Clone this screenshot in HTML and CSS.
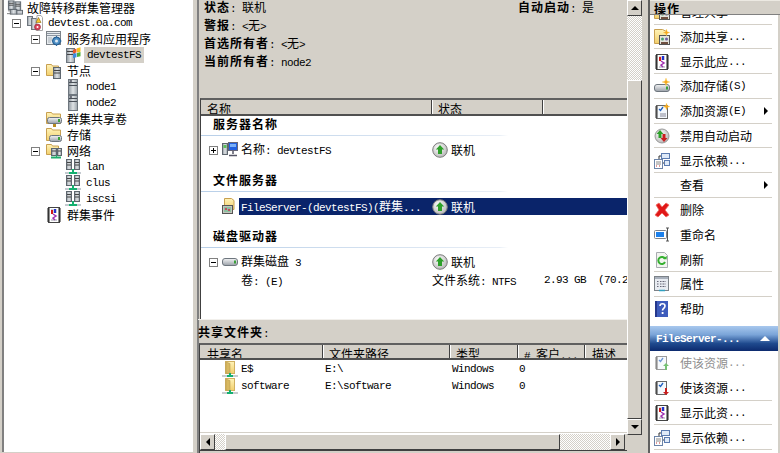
FILE: index.html
```html
<!DOCTYPE html>
<html lang="zh-CN">
<head>
<meta charset="utf-8">
<title>故障转移群集管理器</title>
<link rel="stylesheet" href="styles.css">
</head>
<body>
<svg class="defs" xmlns="http://www.w3.org/2000/svg">
<defs>
<linearGradient id="m" x1="0" x2="1" y1="0" y2="0"><stop offset="0" stop-color="#8f979e"/><stop offset=".5" stop-color="#dfe3e6"/><stop offset="1" stop-color="#9aa2a8"/></linearGradient>
<linearGradient id="f" x1="0" x2="0" y1="0" y2="1"><stop offset="0" stop-color="#fff3b8"/><stop offset="1" stop-color="#f2cf6c"/></linearGradient>
<linearGradient id="d" x1="0" x2="0" y1="0" y2="1"><stop offset="0" stop-color="#f4f5f6"/><stop offset="1" stop-color="#9aa0a8"/></linearGradient>
<radialGradient id="r" cx=".4" cy=".35" r=".7"><stop offset="0" stop-color="#fff"/><stop offset="1" stop-color="#b4b4b4"/></radialGradient>
<symbol id="srv" viewBox="0 0 16 16"><rect x="3.5" y=".5" width="9" height="15" fill="url(#m)" stroke="#6e767e"/><path d="M4 3.5h8M4 6.5h8" stroke="#4a5058"/><path d="M5 2h2" stroke="#223"/></symbol>
<symbol id="root" viewBox="0 0 17 16"><rect x="1.5" y=".5" width="6" height="9" fill="url(#m)" stroke="#5e666e"/><rect x="8.5" y="1.5" width="6" height="9" fill="url(#m)" stroke="#5e666e"/><path d="M2 3h5M2 5h5M9 4h5M9 6h5" stroke="#444"/><rect x="3.5" y="9.5" width="7" height="5" fill="url(#m)" stroke="#5e666e"/><rect x="10.5" y="10.5" width="6" height="4" fill="#c9cdd2" stroke="#5e666e"/><path d="M1 11h3M0 14h4" stroke="#777"/></symbol>
<symbol id="cluster" viewBox="0 0 16 16"><rect x=".5" y="1.5" width="5" height="9" fill="url(#m)" stroke="#6e767e"/><rect x="4.5" y="3.5" width="5" height="11" fill="url(#m)" stroke="#6e767e"/><path d="M10 .5h4l1.5 2v13H9z" fill="#fff" stroke="#aaa"/><path d="M11.5 2.5l2.5 5h-5z" fill="#f7c52a" stroke="#8a6a10" stroke-width=".6"/><circle cx="10.5" cy="12" r="3" fill="#d8435a" stroke="#8c2030" stroke-width=".6"/><circle cx="10.5" cy="12" r="1" fill="#fff"/></symbol>
<symbol id="svc" viewBox="0 0 16 16"><rect x=".5" y=".5" width="14" height="13" fill="#e8ecef" stroke="#7c8288"/><path d="M1 2.500h13M1 4.500h13" stroke="#8c95a0"/><path d="M2 7h4M2 9h4M2 11h3" stroke="#a8b0b8"/><circle cx="10.500" cy="10" r="4" fill="#4e8fc4" stroke="#20568a"/><circle cx="10.500" cy="10" r="1.500" fill="#dfeaf4"/><path d="M10.500 5v1.500M10.500 13.500V15M6 10h1M14 10h1.500M7.500 7l1 1M12.500 12l1 1M13.500 7l-1 1M8.500 12l-1 1" stroke="#2e6ca0"/></symbol>
<symbol id="winsrv" viewBox="0 0 16 16"><rect x="1.500" y="1.500" width="8" height="14" fill="url(#m)" stroke="#6e767e"/><path d="M2 4.500h7M2 7.500h7" stroke="#444"/><path d="M8 3l3.500-1.500v4L8 6.500z" fill="#e8582a"/><path d="M12 1.200l3.500-1v4.500L12 5.500z" fill="#f4c020"/><path d="M8 7l3.500-1v4.300L8 11z" fill="#3a8ce0"/><path d="M12 6l3.500-1v4.300L12 10z" fill="#52b03a"/></symbol>
<symbol id="fsrv" viewBox="0 0 16 16"><path d="M.5 12.500V1.500h5l1 1.500h6v9.500z" fill="url(#f)" stroke="#c8a050"/><rect x="7.500" y="4.500" width="7" height="11" fill="url(#m)" stroke="#5e666e"/><path d="M8 7.500h6M8 10h6" stroke="#444"/></symbol>
<symbol id="fdisk" viewBox="0 0 16 16"><path d="M.5 12.500V1.500h5l1 1.500h8v9.500z" fill="url(#f)" stroke="#c8a050"/><rect x="1.500" y="6.500" width="14" height="6" rx="2" fill="url(#d)" stroke="#6e767e"/><rect x="12" y="8" width="2" height="3" fill="#3aa03a"/><rect x="7" y="13" width="3" height="3" fill="#b88a20"/></symbol>
<symbol id="fdisk2" viewBox="0 0 16 16"><path d="M.5 13.500V1.500h5l1 1.500h8v10.500z" fill="url(#f)" stroke="#c8a050"/><rect x="3.500" y="8.500" width="12" height="6" rx="2" fill="url(#d)" stroke="#6e767e"/><rect x="12" y="10" width="2" height="3" fill="#3aa03a"/></symbol>
<symbol id="fnet" viewBox="0 0 16 16"><path d="M.5 11.500V1.500h5l1 1.500h6v8.500z" fill="url(#f)" stroke="#c8a050"/><rect x="5.500" y="5.500" width="5" height="7" fill="url(#m)" stroke="#5e666e"/><rect x="11.500" y="5.500" width="4" height="7" fill="url(#m)" stroke="#5e666e"/><path d="M6 8h4M12 8h3" stroke="#444"/><path d="M5 14.500h10" stroke="#1fae6c" stroke-width="2"/><path d="M10.500 12v2" stroke="#1fae6c"/></symbol>
<symbol id="net" viewBox="0 0 16 16"><rect x="1.500" y=".5" width="5" height="10" fill="url(#m)" stroke="#5e666e"/><rect x="9.500" y=".5" width="5" height="10" fill="url(#m)" stroke="#5e666e"/><path d="M2 3.500h4M2 6h4M10 3.500h4M10 6h4" stroke="#444"/><path d="M0 14h4M12 14h4" stroke="#c4cad0" stroke-width="2"/><path d="M4 14h8" stroke="#15b070" stroke-width="2"/><path d="M8 10v4" stroke="#15b070" stroke-width="2"/></symbol>
<symbol id="log" viewBox="0 0 16 16"><rect x="2.500" y=".5" width="11" height="15" fill="#fff" stroke="#444"/><path d="M1 2h3M1 4h3M1 6h3M1 8h3M1 10h3M1 12h3M1 14h3M12 2h3M12 4h3M12 6h3M12 8h3M12 10h3M12 12h3M12 14h3" stroke="#222"/><path d="M5 3h6M5 5h6M5 13h6" stroke="#9a9aaa"/><path d="M6 3v4" stroke="#d01818" stroke-width="2"/><path d="M9 2v4" stroke="#2030d0" stroke-width="2"/><path d="M7 7l3 2-3 2 2 2" fill="none" stroke="#a030b0" stroke-width="1.500"/></symbol>
<symbol id="up" viewBox="0 0 16 16"><circle cx="8" cy="8" r="7.300" fill="url(#r)" stroke="#7c7c7c"/><path d="M8 3l4.200 4.500H10V12H6V7.500H3.800z" fill="#2ea02a"/></symbol>
<symbol id="net2" viewBox="0 0 16 16"><rect x=".5" y="1.500" width="5" height="11" fill="url(#m)" stroke="#5e666e"/><rect x="1.500" y="3" width="3" height="3" fill="#5cc05c"/><rect x="6.500" y=".5" width="9" height="8" fill="#2060e0" stroke="#667"/><path d="M8 2h6v3H8z" fill="#7ab0f8"/><path d="M11 9v3M7 13.500h8" stroke="#556" stroke-width="1.500"/></symbol>
<symbol id="fapp" viewBox="0 0 16 16"><path d="M2.500 11V.5h7l2.500 2v9z" fill="url(#f)" stroke="#c8a050"/><rect x=".5" y="7.500" width="10" height="8" fill="#c4c4bc" stroke="#555"/><rect x="2" y="9" width="7" height="5" fill="#8cc0a0"/><path d="M3 10h2v2H3zM6 11h2v2H6z" fill="#c05060"/></symbol>
<symbol id="disk" viewBox="0 0 16 16"><rect x=".5" y="4.500" width="15" height="7" rx="2.500" fill="url(#d)" stroke="#6e767e"/><rect x="12" y="6.500" width="2" height="3" fill="#3aa03a"/></symbol>
<symbol id="nfold" viewBox="0 0 16 16"><rect x="3.500" y=".5" width="9" height="12" fill="url(#f)" stroke="#d0b060"/><path d="M4 1l4 1.500V13L4 12z" fill="#d8b860" stroke="#b89a50" stroke-width=".6"/><path d="M0 15h16" stroke="#c8cdd0" stroke-width="2"/><path d="M5 15h6M8 12v3" stroke="#15b070" stroke-width="2"/></symbol>
<symbol id="star" viewBox="0 0 8 8"><path d="M4 0l1 3 3 1-3 1-1 3-1-3-3-1 3-1z" fill="#f6a81c" stroke="#fbd46a" stroke-width=".4"/></symbol>
<symbol id="ashare" viewBox="0 0 16 16"><path d="M.5 14.500V.5h8l4 2v12z" fill="url(#f)" stroke="#c8a050"/><rect x="5.500" y="6.500" width="10" height="9" fill="#e4e4dc" stroke="#555"/><circle cx="8.500" cy="10" r="1.500" fill="#48a070"/><circle cx="12.500" cy="10" r="1.500" fill="#7060a0"/><path d="M7 14h7" stroke="#705040" stroke-width="2"/><use href="#star" x="9" y="0" width="7" height="7"/></symbol>
<symbol id="adisk" viewBox="0 0 16 16"><rect x=".5" y="6.500" width="15" height="7" rx="2.500" fill="url(#d)" stroke="#6e767e"/><rect x="12" y="8.500" width="2" height="3" fill="#3aa03a"/><use href="#star" x="8" y="0" width="8" height="8"/></symbol>
<symbol id="ares" viewBox="0 0 16 16"><rect x="2.500" y="2.500" width="11" height="13" fill="#f4f8fc" stroke="#666"/><path d="M1 4h3M1 6h3M1 8h3M1 10h3M1 12h3M1 14h3" stroke="#333"/><path d="M5 6l1.500 1.500L9 4" fill="none" stroke="#2060c0" stroke-width="1.300"/><path d="M6 11h6M6 13h6" stroke="#889"/><use href="#star" x="9" y="0" width="7" height="7"/></symbol>
<symbol id="adis" viewBox="0 0 16 16"><circle cx="8" cy="8" r="7" fill="url(#r)" stroke="#999"/><path d="M6 2l3.500 4H7.500v4h-3V6H2.500z" fill="#2ea02a"/><path d="M10 14l-3.500-4h2V6h3v4h2z" fill="#c81e1e"/></symbol>
<symbol id="adep" viewBox="0 0 16 16"><rect x=".5" y="6.500" width="8" height="9" fill="#fff" stroke="#6c84a8"/><path d="M2 9h5M2 11h5" stroke="#888"/><path d="M2 13h1M5 13h1" stroke="#c03030"/><rect x="7.500" y=".5" width="8" height="5" fill="#dfeaf8" stroke="#5c7cb0"/><rect x="10.500" y="7.500" width="5" height="5" fill="#dfeaf8" stroke="#5c7cb0"/><path d="M5 6V3h2M9 10h1" stroke="#333" fill="none"/></symbol>
<symbol id="adel" viewBox="0 0 16 16"><path d="M2 3l3-2 3 4 4-4 3 2-4 5 4 5-3 2-4-4-4 4-3-2 4-5z" fill="#e01818" stroke="#f06a60" stroke-width=".8"/></symbol>
<symbol id="aren" viewBox="0 0 16 16"><rect x=".5" y="3.500" width="12" height="8" rx="1" fill="#fff" stroke="#7c828c"/><rect x="2" y="5" width="8" height="5" fill="#1c80ec"/><path d="M12 1h3M13.500 1v13M12 14h3" stroke="#555" fill="none"/></symbol>
<symbol id="aref" viewBox="0 0 16 16"><path d="M2.500 .5h8l3 3v12h-11z" fill="#f2f4f0" stroke="#a8acb0"/><path d="M11 7a3.500 3.500 0 1 0 0 3" fill="none" stroke="#35b030" stroke-width="2"/><path d="M9 6.500l3.500 1 .5-3.500z" fill="#35b030"/></symbol>
<symbol id="aprop" viewBox="0 0 16 16"><rect x=".5" y=".5" width="14" height="14" fill="#e8ecf2" stroke="#7c8288"/><rect x="1" y="1" width="13" height="2" fill="#a8b0bc"/><path d="M3 5.500h2M6 5.500h6M3 8h2M6 8h6M3 10.500h2M6 10.500h6" stroke="#667" stroke-dasharray="1 .5"/><path d="M5 14.500h6" stroke="#30a0c0" stroke-width="1.500"/></symbol>
<symbol id="ahelp" viewBox="0 0 16 16"><rect x="1" y="0" width="13" height="16" fill="#3e5cbc"/><rect x="1" y="0" width="2" height="16" fill="#25388c"/><path d="M6 5c0-3 5-3 5 0 0 2.300-2.500 2.300-2.500 4.500" fill="none" stroke="#fff" stroke-width="1.600"/><rect x="7.700" y="11" width="1.800" height="2" fill="#fff"/></symbol>
<symbol id="aresu" viewBox="0 0 16 16"><rect x="2.500" y="1.500" width="10" height="13" fill="#f4f8fc" stroke="#666"/><path d="M1 3h3M1 5h3M1 7h3M1 9h3M1 11h3M1 13h3" stroke="#333"/><path d="M5 5l1.500 1.500L9 3" fill="none" stroke="#2060c0" stroke-width="1.300"/><path d="M12 8l3 3h-2v4h-2v-4H9z" fill="#2ea02a"/></symbol>
<symbol id="aresd" viewBox="0 0 16 16"><rect x="2.500" y="1.500" width="10" height="13" fill="#f4f8fc" stroke="#666"/><path d="M1 3h3M1 5h3M1 7h3M1 9h3M1 11h3M1 13h3" stroke="#333"/><path d="M5 5l1.500 1.500L9 3" fill="none" stroke="#2060c0" stroke-width="1.300"/><path d="M12 15l-3-3h2V8h2v4h2z" fill="#c81e1e"/></symbol>
</defs>
</svg>

<div class="app">
  <aside class="tree-pane">
    <div class="trow l0"><svg class="ic"><use href="#root"/></svg><span>故障转移群集管理器</span></div>
    <div class="trow l1"><i class="exp minus"></i><svg class="ic"><use href="#cluster"/></svg><span class="en">devtest.oa.com</span></div>
    <div class="trow l2"><i class="exp minus"></i><svg class="ic"><use href="#svc"/></svg><span>服务和应用程序</span></div>
    <div class="trow l3"><svg class="ic"><use href="#winsrv"/></svg><span class="en tsel">devtestFS</span></div>
    <div class="trow l2"><i class="exp minus"></i><svg class="ic"><use href="#fsrv"/></svg><span>节点</span></div>
    <div class="trow l3"><svg class="ic"><use href="#srv"/></svg><span class="en">node1</span></div>
    <div class="trow l3"><svg class="ic"><use href="#srv"/></svg><span class="en">node2</span></div>
    <div class="trow l2n"><svg class="ic"><use href="#fdisk"/></svg><span>群集共享卷</span></div>
    <div class="trow l2n"><svg class="ic"><use href="#fdisk2"/></svg><span>存储</span></div>
    <div class="trow l2"><i class="exp minus"></i><svg class="ic"><use href="#fnet"/></svg><span>网络</span></div>
    <div class="trow l3"><svg class="ic"><use href="#net"/></svg><span class="en">lan</span></div>
    <div class="trow l3"><svg class="ic"><use href="#net"/></svg><span class="en">clus</span></div>
    <div class="trow l3"><svg class="ic"><use href="#net"/></svg><span class="en">iscsi</span></div>
    <div class="trow l2n"><svg class="ic"><use href="#log"/></svg><span>群集事件</span></div>
  </aside>

  <main class="center">
    <section class="summary">
      <div class="sum-grid">
        <div><b class="b">状态<span class="en">: </span></b><span class="val">联机</span></div>
        <div><b class="b">自动启动<span class="en">: </span></b><span class="val">是</span></div>
        <div class="wide"><b class="b">警报<span class="en">: </span></b><span class="val"><span class="en">&lt;</span>无<span class="en">&gt;</span></span></div>
        <div class="wide"><b class="b">首选所有者<span class="en">: </span></b><span class="val"><span class="en">&lt;</span>无<span class="en">&gt;</span></span></div>
        <div class="wide"><b class="b">当前所有者<span class="en">: </span></b><span class="val en">node2</span></div>
      </div>
    </section>

    <section class="list">
      <div class="lhead">
        <div class="hc c-name">名称</div>
        <div class="hc c-state">状态</div>
        <div class="hc c-fill"></div>
      </div>
      <div class="lbody">
        <h3 class="gt">服务器名称</h3>
        <div class="grow">
          <div class="slot"><i class="exp plus"></i><svg class="ic"><use href="#net2"/></svg></div>
          <div class="main">
            <div class="m1">名称<span class="en">: devtestFS</span></div>
            <div class="m2"><svg class="ic"><use href="#up"/></svg><span>联机</span></div>
          </div>
        </div>
        <h3 class="gt">文件服务器</h3>
        <div class="grow">
          <div class="slot"><i class="exp blank"></i><svg class="ic"><use href="#fapp"/></svg></div>
          <div class="main sel">
            <div class="m1"><span class="en">FileServer-(devtestFS)(</span>群集<span class="en">...</span></div>
            <div class="m2"><svg class="ic"><use href="#up"/></svg><span>联机</span></div>
          </div>
        </div>
        <h3 class="gt">磁盘驱动器</h3>
        <div class="grow tight">
          <div class="slot"><i class="exp minus"></i><svg class="ic"><use href="#disk"/></svg></div>
          <div class="main">
            <div class="m1">群集磁盘<span class="en"> 3</span></div>
            <div class="m2"><svg class="ic"><use href="#up"/></svg><span>联机</span></div>
          </div>
        </div>
        <div class="grow2">
          <div class="m1">卷<span class="en">: (E)</span></div>
          <div class="m3">文件系统<span class="en">: NTFS</span></div>
          <div class="m4 en">2.93 GB  (70.2%)</div>
        </div>
      </div>
    </section>

    <section class="band"><b class="b">共享文件夹<span class="en">:</span></b></section>

    <section class="shares">
      <div class="shead">
        <div class="hc s1">共享名</div>
        <div class="hc s2">文件夹路径</div>
        <div class="hc s3">类型</div>
        <div class="hc s4"><span class="en"># </span>客户<span class="en">...</span></div>
        <div class="hc s5">描述</div>
      </div>
      <div class="sbody">
        <div class="srow en"><div class="d1"><svg class="ic"><use href="#nfold"/></svg>E$</div><div class="d2">E:\</div><div class="d3">Windows</div><div>0</div></div>
        <div class="srow en"><div class="d1"><svg class="ic"><use href="#nfold"/></svg>software</div><div class="d2">E:\software</div><div class="d3">Windows</div><div>0</div></div>
      </div>
      <div class="hscroll">
        <div class="btn"><i class="tri left"></i></div>
        <div class="dither d-a"></div>
        <div class="thumb grow-x"></div>
        <div class="dither d-b"></div>
        <div class="btn"><i class="tri right"></i></div>
      </div>
    </section>
  </main>

  <div class="vscroll">
    <div class="btn v"><i class="tri upw"></i></div>
    <div class="dither d-c"></div>
    <div class="thumb d-d"></div>
    <div class="btn v"><i class="tri down"></i></div>
  </div>

  <aside class="actions">
    <div class="ahead"><b class="b">操作</b></div>
    <div class="ascroll">
      <div class="alist">
        <div class="ai"><svg class="ic"><use href="#ashare"/></svg>管理共享<span class="en">...</span></div>
        <div class="ai"><svg class="ic"><use href="#ashare"/></svg>添加共享<span class="en">...</span></div>
        <div class="ai"><svg class="ic"><use href="#log"/></svg>显示此应<span class="en">...</span></div>
        <div class="ai"><svg class="ic"><use href="#adisk"/></svg>添加存储<span class="en">(S)</span></div>
        <div class="ai"><svg class="ic"><use href="#ares"/></svg>添加资源<span class="en">(E)</span><i class="tri sub"></i></div>
        <div class="ai"><svg class="ic"><use href="#adis"/></svg>禁用自动启动</div>
        <div class="ai"><svg class="ic"><use href="#adep"/></svg>显示依赖<span class="en">...</span></div>
        <div class="ai"><span class="ic"></span>查看<i class="tri sub"></i></div>
        <div class="ai nl"><svg class="ic"><use href="#adel"/></svg>删除</div>
        <div class="ai nl"><svg class="ic"><use href="#aren"/></svg>重命名</div>
        <div class="ai"><svg class="ic"><use href="#aref"/></svg>刷新</div>
        <div class="ai"><svg class="ic"><use href="#aprop"/></svg>属性</div>
        <div class="ai nl"><svg class="ic"><use href="#ahelp"/></svg>帮助</div>
      </div>
      <div class="asec"><b class="en">FileServer-...</b><i class="tri upw white"></i></div>
      <div class="ai nl off"><svg class="ic"><use href="#aresu"/></svg>使该资源<span class="en">...</span></div>
      <div class="ai"><svg class="ic"><use href="#aresd"/></svg>使该资源<span class="en">...</span></div>
      <div class="ai"><svg class="ic"><use href="#log"/></svg>显示此资<span class="en">...</span></div>
      <div class="ai"><svg class="ic"><use href="#adep"/></svg>显示依赖<span class="en">...</span></div>
    </div>
  </aside>
</div>
</body>
</html>
```
FILE: styles.css
```css
* { box-sizing: border-box; }
html, body { margin: 0; padding: 0; background: #d4d0c8; }
body {
  font-family: "Noto Sans CJK SC", "Liberation Sans", sans-serif;
  font-size: 12px;
  line-height: 16px;
  color: #000;
}
.defs { position: absolute; width: 0; height: 0; }
.app { display: flex; width: 780px; height: 453px; overflow: hidden; background: #d4d0c8; }
.en { font-family: "Liberation Mono", monospace; font-size: 11px; letter-spacing: -0.6px; font-weight: normal; white-space: pre; }
.ic { width: 16px; height: 16px; flex: none; display: block; }
.b { font-weight: 700; letter-spacing: 1px; }
.b .en { letter-spacing: -0.6px; }

/* tree */
.tree-pane {
  width: 191px; height: 452px; flex: none;
  border-left: 2px solid #808080; background: #fff; overflow: hidden;
  margin-right: 4px; margin-left: 2px;
}
.trow { display: flex; align-items: center; height: 16px; white-space: nowrap; }
.trow:first-child { height: 15px; }
.trow .ic { margin-right: 5px; }
.l0 { padding-left: 3px; }
.l0 .ic { margin-right: 4px; }
.l1 { padding-left: 8px; }
.l2 { padding-left: 27px; }
.l2n { padding-left: 42px; }
.l3 { padding-left: 61px; }
.tsel { background: #d4d0c8; padding: 0 3px; margin-left: -2px; height: 16px; line-height: 16px; }
.exp { display: block; flex: none; width: 9px; height: 9px; margin-right: 6px; border: 1px solid #808080; background: #fff; position: relative; }
.exp.blank { border: 0; background: none; }
.exp.minus::before, .exp.plus::before { content: ""; position: absolute; left: 1px; top: 3px; width: 5px; height: 1px; background: #000; }
.exp.plus::after { content: ""; position: absolute; left: 3px; top: 1px; width: 1px; height: 5px; background: #000; }

/* center */
.center { width: 430px; flex: none; display: flex; flex-direction: column; border-left: 2px solid #808080; }
.summary { height: 98px; flex: none; overflow: hidden; }
.sum-grid { display: grid; grid-template-columns: 314px 1fr; grid-auto-rows: 18px; margin-top: -2px; padding-left: 5px; line-height: 18px; }
.wide { grid-column: 1 / 3; }

.list { height: 221px; flex: none; border-left: 1px solid #404040; border-top: 2px solid #606060; margin-left: 1px; display: flex; flex-direction: column; }
.lhead { display: flex; height: 16px; flex: none; border-bottom: 2px solid #505050; overflow: hidden; }
.hc { height: 14px; background: #d4d0c8; padding-left: 6px; padding-top: 1px; border-right: 1px solid #404040; box-shadow: 1px 0 0 #fff; margin-right: 1px; line-height: 16px; white-space: nowrap; overflow: hidden; }
.c-name { width: 231px; }
.c-state { width: 110px; padding-left: 5px; }
.c-fill { flex: 1; border-right: 0; box-shadow: none; margin: 0; }
.lbody { flex: 1; background: #fff; overflow: hidden; }
.gt { margin: 0; height: 20px; padding-left: 12px; font-size: 12px; font-weight: 700; letter-spacing: 1px; line-height: 16px; border-bottom: 1px solid; border-image: linear-gradient(90deg, #b8cfe8, #e8eef6 70%, #fff 72%) 1; }
.grow { display: flex; height: 16px; margin-top: 6px; margin-bottom: 14px; white-space: nowrap; }
.grow.tight { margin-bottom: 2px; }
.slot { width: 38px; flex: none; display: flex; align-items: center; padding-left: 8px; }
.slot .exp { margin-right: 4px; }
.main { flex: 1; display: flex; align-items: center; min-width: 0; }
.sel { background: #0a246a; color: #fff; height: 17px; }
.m1 { width: 193px; flex: none; padding-left: 2px; white-space: nowrap; overflow: hidden; }
.m2 { display: flex; align-items: center; gap: 3px; }
.grow2 { display: flex; padding-left: 38px; height: 16px; white-space: nowrap; overflow: hidden; }
.m3 { width: 112px; flex: none; }
.m4 { flex: none; }

.band { height: 24px; flex: none; border-top: 1px solid #f2f0ec; margin-left: -1px; line-height: 24px; }
.band .b { display: block; }
.shares { flex: 1; display: flex; flex-direction: column; border-left: 1px solid #404040; border-top: 2px solid #606060; }
.shead { display: flex; height: 15px; flex: none; border-bottom: 2px solid #505050; overflow: hidden; padding-left: 1px; }
.s1 { width: 122px; padding-left: 6px; }
.s2 { width: 126px; padding-left: 5px; }
.s3 { width: 67px; padding-left: 5px; }
.s4 { width: 66px; padding-left: 5px; }
.s5 { flex: 1; padding-left: 6px; border-right: 0; box-shadow: none; margin: 0; }
.sbody { height: 72px; flex: none; background: #fff; }
.srow { display: flex; height: 17px; align-items: center; white-space: nowrap; }
.d1 { width: 125px; padding-left: 22px; display: flex; align-items: center; gap: 3px; }
.d2 { width: 127px; }
.d3 { width: 67px; }
.hscroll { display: flex; height: 18px; flex: none; margin-top: 1px; border-top: 1px solid #fff; border-bottom: 1px solid #404040; padding-right: 2px; }

/* scrollbars */
.btn { width: 15px; height: 16px; flex: none; background: #d4d0c8; border: 1px solid; border-color: #fff #404040 #404040 #fff; display: flex; align-items: center; justify-content: center; }
.thumb { background: #d4d0c8; border: 1px solid; border-color: #fff #404040 #404040 #fff; }
.grow-x { width: 335px; flex: none; }
.dither { background: repeating-conic-gradient(#fff 0 25%, #d4d0c8 0 50%) 0 0 / 2px 2px; }
.d-a { width: 10px; flex: none; }
.d-b { flex: 1; }
.d-c { height: 64px; flex: none; }
.d-d { height: 339px; flex: none; }
.vscroll { width: 15px; flex: none; display: flex; flex-direction: column; }
.tri { display: block; width: 0; height: 0; border-style: solid; border-color: transparent; }
.tri.left { border-width: 4px 4px 4px 0; border-right-color: #000; }
.tri.right { border-width: 4px 0 4px 4px; border-left-color: #000; }
.tri.upw { border-width: 0 4px 4px 4px; border-bottom-color: #000; }
.tri.down { border-width: 4px 4px 0 4px; border-top-color: #000; }
.tri.sub { border-width: 4px 0 4px 4px; border-left-color: #000; position: absolute; right: 4px; top: 8px; }
.tri.white { border-bottom-color: #fff; margin-left: auto; margin-right: 8px; border-width: 0 5px 5px 5px; }

/* actions */
.actions { width: 132px; flex: none; margin-left: 6px; border-left: 2px solid #606060; display: flex; flex-direction: column; height: 453px; }
.ahead { height: 15px; flex: none; padding-left: 4px; line-height: 15px; border-top: 1px solid #ece9e2; border-bottom: 1px solid #808080; overflow: hidden; }
.ascroll { flex: 1; background: #fff; overflow: hidden; margin-right: 2px; }
.alist { margin-top: -15.25px; padding-bottom: 4.5px; }
.ai { position: relative; display: flex; align-items: center; height: 24.75px; margin: 0 6px 0 4px; padding-top: 1px; border-bottom: 1px solid #d4d0c8; white-space: nowrap; }
.ai .ic { margin-right: 10px; }
.ai.nl { border-bottom-color: transparent; }
.ai.off { color: #909090; }
.ai.off .ic { opacity: .65; }
.asec { display: flex; align-items: center; height: 25px; padding-left: 6px; background: linear-gradient(180deg, #a8c8ee 0, #7aa4d8 35%, #1f4a8e 70%, #0c2a6e 100%); color: #fff; }
.asec .en { font-weight: 700; font-size: 11px; letter-spacing: -.6px; }
```
